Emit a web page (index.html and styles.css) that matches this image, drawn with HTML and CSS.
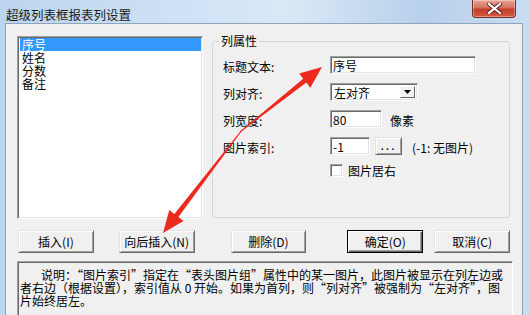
FILE: index.html
```html
<!DOCTYPE html>
<html lang="zh-CN">

<head>
  <meta charset="UTF-8">
  <title>超级列表框报表列设置</title>
  <link rel="stylesheet" href="styles.css">
</head>

<body>
  <div class="window">
    <div class="titlebar">
      <span class="title">超级列表框报表列设置</span>
      <div class="close">
        <svg width="15" height="11" viewBox="0 0 15 11">
          <path d="M2 1 L13 10 M13 1 L2 10" stroke="#5a1a14" stroke-width="4" stroke-linecap="square" />
          <path d="M2 1 L13 10 M13 1 L2 10" stroke="#fff" stroke-width="2.2" stroke-linecap="square" />
        </svg>
      </div>
    </div>

    <div class="client">
      <div class="top">
        <ul class="listbox">
          <li class="selected">序号</li>
          <li>姓名</li>
          <li>分数</li>
          <li>备注</li>
        </ul>

        <fieldset class="group">
          <legend>列属性</legend>
          <div class="form">
            <span class="label">标题文本:</span>
            <div class="field"><span class="edit edit-title">序号</span></div>

            <span class="label">列对齐:</span>
            <div class="field">
              <span class="combo"><span class="combo-text">左对齐</span><span class="combo-btn">
                  <svg width="7" height="4" viewBox="0 0 7 4"><path d="M0 0 H7 L3.5 4 Z" fill="#000" /></svg>
                </span></span>
            </div>

            <span class="label">列宽度:</span>
            <div class="field"><span class="edit edit-width">80</span><span class="after">像素</span></div>

            <span class="label">图片索引:</span>
            <div class="field">
              <span class="edit edit-index">-1</span>
              <span class="small-btn">...</span>
              <span class="hint">(-1: 无图片)</span>
            </div>

            <span class="label"></span>
            <div class="field field-check"><span class="checkbox"></span><span>图片居右</span></div>
          </div>
        </fieldset>
      </div>

      <div class="buttons">
        <span class="btn">插入(I)</span>
        <span class="btn btn-after">向后插入(N)</span>
        <span class="btn btn-delete">删除(D)</span>
        <span class="btn btn-default btn-ok">确定(O)</span>
        <span class="btn btn-cancel">取消(C)</span>
      </div>

      <div class="note">
        <p class="first">说明：“图片索引”指定在“表头图片组”属性中的某一图片，此图片被显示在列左边或</p>
        <p>者右边（根据设置），索引值从 0 开始。如果为首列，则“列对齐”被强制为“左对齐”，图</p>
        <p>片始终居左。</p>
      </div>
    </div>

    <!-- red annotation arrows -->
    <svg class="arrows" width="529" height="315" viewBox="0 0 529 315">
      <polygon fill="#ee2a1f" points="322,67 299.2,73.6 303.2,78.7 239.7,131.6 240.3,132.4 306.3,82.6 310.3,87.7" />
      <polygon fill="#ee2a1f" points="163,233 183.5,221 178.4,217.1 242.4,130.3 241.6,129.7 174.4,214 169.3,210.1" />
    </svg>
  </div>
</body>

</html>
```

FILE: styles.css
```css
* {
  box-sizing: border-box;
  margin: 0;
  padding: 0;
}

body {
  width: 529px;
  height: 315px;
  overflow: hidden;
  font-family: "Noto Sans CJK SC", "Liberation Sans", sans-serif;
  font-size: 12px;
  color: #000;
}

.window {
  position: relative;
  width: 529px;
  height: 315px;
  display: flex;
  flex-direction: column;
  background: linear-gradient(to right, #bcd5ee 0%, #cfe2f5 35%, #d9e8f6 55%, #b7d0ea 80%, #c9ddf2 100%);
}

/* title bar */
.titlebar {
  height: 27px;
  display: flex;
  align-items: flex-start;
  justify-content: space-between;
  padding-left: 6px;
}

.title {
  margin-top: 7px;
  line-height: 16px;
  font-size: 12.5px;
  color: #1a1a1a;
}

.close {
  width: 44px;
  height: 18px;
  margin-right: 13px;
  display: flex;
  align-items: center;
  justify-content: center;
  border: 1px solid #7d2a22;
  border-top: none;
  border-radius: 0 0 4px 4px;
  background: linear-gradient(#e7a596 0%, #d6705e 45%, #c13c28 55%, #d65b41 100%);
  box-shadow: inset 0 0 0 1px rgba(255, 255, 255, 0.35);
}

/* dialog body */
.client {
  flex: 1;
  margin: 0 6px 0 5px;
  padding: 12px 12px 0 11px;
  background: #f0f0f0;
  border: 1px solid #8fa5bd;
  border-bottom: none;
}

.top {
  display: flex;
  align-items: flex-start;
  height: 183px;
}

.listbox {
  width: 186px;
  height: 183px;
  list-style: none;
  background: #fff;
  border: 1px solid;
  border-color: #a0a0a0 #fff #fff #a0a0a0;
  box-shadow: inset 1px 1px #696969, inset -1px -1px #e3e3e3;
  padding: 1px 1px 0 2px;
}

.listbox li {
  line-height: 13px;
  height: 13px;
  padding-left: 2px;
}

.listbox li.selected {
  background: #3399ff;
  color: #fff;
}

.group {
  width: 298px;
  height: 184px;
  margin: -2px 0 0 9px;
  border: 1px solid #d0d6dc;
  border-radius: 3px;
  padding: 0;
}

.group legend {
  margin-left: 6px;
  padding: 0 2px;
  line-height: 14px;
}

.form {
  display: grid;
  grid-template-columns: 107px 1fr;
  grid-auto-rows: 18px;
  row-gap: 9px;
  padding: 8px 0 0 10px;
}

.label {
  display: flex;
  align-items: center;
  padding-top: 3px;
}

.field {
  display: flex;
  align-items: center;
}

.edit {
  height: 18px;
  line-height: 16px;
  padding-left: 2px;
  background: #fff;
  border: 1px solid;
  border-color: #a0a0a0 #fff #fff #a0a0a0;
  box-shadow: inset 1px 1px #696969, inset -1px -1px #e3e3e3;
  padding-top: 1px;
}

.edit-title {
  width: 146px;
}

.edit-width {
  width: 52px;
}

.edit-index {
  width: 40px;
}

.after {
  margin-left: 8px;
  padding-top: 2px;
}

.combo {
  width: 88px;
  height: 18px;
  display: flex;
  background: #fff;
  border: 1px solid;
  border-color: #a0a0a0 #fff #fff #a0a0a0;
  box-shadow: inset 1px 1px #696969, inset -1px -1px #e3e3e3;
  padding: 2px 2px 2px 2px;
}

.combo-text {
  flex: 1;
  line-height: 14px;
  padding-left: 1px;
}

.combo-btn {
  width: 15px;
  display: flex;
  align-items: center;
  justify-content: center;
  background: #f0f0f0;
  border: 1px solid;
  border-color: #fff #696969 #696969 #fff;
}

.small-btn {
  width: 27px;
  height: 18px;
  margin-left: 5px;
  line-height: 14px;
  text-align: center;
  letter-spacing: 2px;
  background: #f0f0f0;
  border: 1px solid;
  border-color: #e3e3e3 #696969 #696969 #e3e3e3;
  box-shadow: inset 1px 1px #fff, inset -1px -1px #a0a0a0;
}

.hint {
  margin-left: 10px;
  padding-top: 2px;
}

.field-check {
  height: 13px;
  align-self: start;
}

.checkbox {
  width: 13px;
  height: 13px;
  margin-right: 5px;
  background: #fff;
  border: 1px solid;
  border-color: #a0a0a0 #fff #fff #a0a0a0;
  box-shadow: inset 1px 1px #696969, inset -1px -1px #e3e3e3;
}

/* push buttons */
.buttons {
  display: flex;
  margin: 11px 0 0 1px;
}

.btn {
  width: 76px;
  height: 23px;
  display: flex;
  align-items: center;
  justify-content: center;
  background: #f0f0f0;
  border: 1px solid;
  border-color: #e3e3e3 #696969 #696969 #e3e3e3;
  box-shadow: inset 1px 1px #fff, inset -1px -1px #a0a0a0;
}

.btn-after {
  margin-left: 25px;
}

.btn-delete {
  margin-left: 36px;
}

.btn-ok {
  margin-left: 41px;
}

.btn-cancel {
  margin-left: 11px;
}

.btn-default {
  border: 1px solid #000;
  box-shadow: inset 1px 1px #fff, inset -1px -1px #696969, inset -2px -2px #a0a0a0;
}

/* description */
.note {
  width: 496px;
  height: 60px;
  margin-top: 8px;
  padding: 6px 0 0 2px;
  border: 1px solid;
  border-color: #a0a0a0 #fff #fff #a0a0a0;
  box-shadow: inset 1px 1px #696969;
  line-height: 13px;
  white-space: nowrap;
}

.note .first {
  text-indent: 21px;
}

.arrows {
  position: absolute;
  top: 0;
  left: 0;
  pointer-events: none;
}
```
